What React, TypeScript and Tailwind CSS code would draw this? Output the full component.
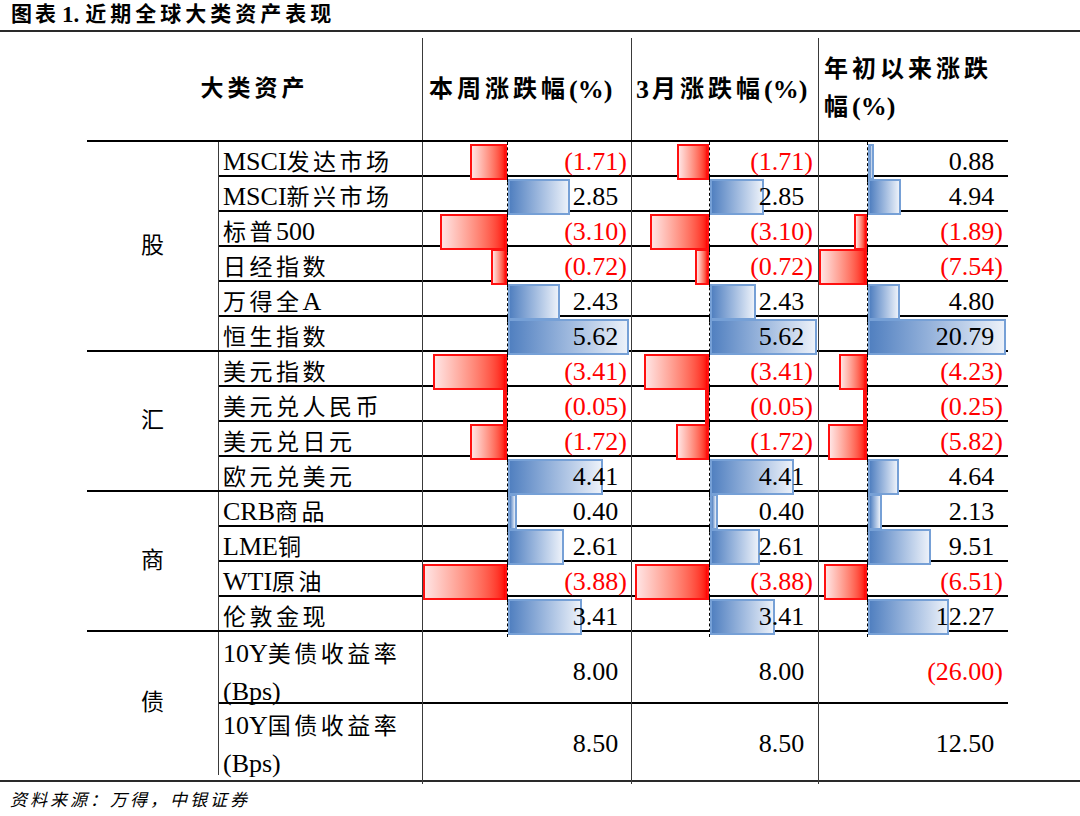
import React from "react";

type Row = { label: string; vals: number[] };
type Group = { name: string; rows: Row[]; bars: boolean };

const groups: Group[] = [
  {
    name: "股",
    bars: true,
    rows: [
      { label: "MSCI发达市场", vals: [-1.71, -1.71, 0.88] },
      { label: "MSCI新兴市场", vals: [2.85, 2.85, 4.94] },
      { label: "标普500", vals: [-3.1, -3.1, -1.89] },
      { label: "日经指数", vals: [-0.72, -0.72, -7.54] },
      { label: "万得全A", vals: [2.43, 2.43, 4.8] },
      { label: "恒生指数", vals: [5.62, 5.62, 20.79] },
    ],
  },
  {
    name: "汇",
    bars: true,
    rows: [
      { label: "美元指数", vals: [-3.41, -3.41, -4.23] },
      { label: "美元兑人民币", vals: [-0.05, -0.05, -0.25] },
      { label: "美元兑日元", vals: [-1.72, -1.72, -5.82] },
      { label: "欧元兑美元", vals: [4.41, 4.41, 4.64] },
    ],
  },
  {
    name: "商",
    bars: true,
    rows: [
      { label: "CRB商品", vals: [0.4, 0.4, 2.13] },
      { label: "LME铜", vals: [2.61, 2.61, 9.51] },
      { label: "WTI原油", vals: [-3.88, -3.88, -6.51] },
      { label: "伦敦金现", vals: [3.41, 3.41, 12.27] },
    ],
  },
  {
    name: "债",
    bars: false,
    rows: [
      { label: "10Y美债收益率\n(Bps)", vals: [8.0, 8.0, -26.0] },
      { label: "10Y国债收益率\n(Bps)", vals: [8.5, 8.5, 12.5] },
    ],
  },
];

// axis offset / px per unit for each data column
const cols = [
  { axis: "w-[85px]", scale: 21.6, pad: "pr-[4px]" },
  { axis: "w-[78px]", scale: 19, pad: "pr-[5px]" },
  { axis: "w-[49px]", scale: 6.64, pad: "pr-[5px]" },
];

const serif = "font-['Liberation_Serif','Noto_Sans_CJK_SC',serif]";

function Mixed({ text, cjk, latin }: { text: string; cjk: string; latin: string }) {
  const parts = text.split(/([\u3000-\u9fff\uff00-\uffef]+)/);
  return (
    <>
      {parts.map((p, i) =>
        i % 2 ? (
          <span key={i} className={cjk}>
            {p}
          </span>
        ) : (
          <span key={i} className={latin}>
            {p}
          </span>
        )
      )}
    </>
  );
}

function DataCell({ value, col, bar }: { value: number; col: (typeof cols)[number]; bar: boolean }) {
  const w = Math.max(1, Math.round(Math.abs(value) * col.scale));
  return (
    <div className="grid border-l border-[#3a3a3a]">
      {bar && (
        <div className="col-start-1 row-start-1 flex">
          <div className={`${col.axis} flex justify-end border-r border-dashed border-black py-[2px]`}>
            {value < 0 && (
              <div
                className="h-full border-2 border-[#ff1010] bg-linear-to-r from-[#ffe4e4] to-[#ff0000]"
                style={{ width: w }}
              />
            )}
          </div>
          <div className="flex flex-1 py-[2px]">
            {value > 0 && (
              <div
                className="h-full border-2 border-[#76a0d6] bg-linear-to-r from-[#5180c0] to-[#ecf1f9]"
                style={{ width: w }}
              />
            )}
          </div>
        </div>
      )}
      <div
        className={`col-start-1 row-start-1 flex items-center justify-end ${col.pad} text-[26px] leading-none ${serif}`}
      >
        {value < 0 ? (
          <span className="text-[#ff0000]">({Math.abs(value).toFixed(2)})</span>
        ) : (
          <span className="text-black">
            {value.toFixed(2)}
            <span className="invisible">)</span>
          </span>
        )}
      </div>
    </div>
  );
}

export default function App() {
  return (
    <div className={`w-[1080px] h-[816px] bg-white text-black ${serif}`}>
      {/* Title */}
      <div className="h-[30px] flex items-center pl-[11px] font-bold">
        <Mixed text="图表" cjk="text-[21px] tracking-[3px]" latin="" />
        <span className="text-[23px] ml-[3px] mr-[6px]">1.</span>
        <Mixed text="近期全球大类资产表现" cjk="text-[21px] tracking-[4px]" latin="" />
      </div>
      <div className="h-[2px] bg-[#2a2a2a]" />

      {/* Table */}
      <div className="ml-[87px] mt-[6px] w-[921px]">
        <div className="grid h-[102px] grid-cols-[335px_209px_187px_190px] font-bold">
          <div className="flex items-center justify-center text-[23px] tracking-[4px]">大类资产</div>
          <div className="flex items-center border-l border-[#3a3a3a] pl-[6px]">
            <Mixed text="本周涨跌幅(%)" cjk="text-[24px] tracking-[4px]" latin="text-[26px]" />
          </div>
          <div className="flex items-center border-l border-[#3a3a3a] pl-[4px]">
            <Mixed text="3月涨跌幅(%)" cjk="text-[24px] tracking-[4px]" latin="text-[26px] mr-[3px]" />
          </div>
          <div className="flex items-center border-l border-[#3a3a3a] pl-[5px]">
            <p className="leading-[35px]">
              <Mixed text="年初以来涨跌幅(%)" cjk="text-[24px] tracking-[4px]" latin="text-[26px]" />
            </p>
          </div>
        </div>

        {groups.map((g) => (
          <div key={g.name} className="flex border-t-2 border-black">
            <div className="flex w-[131px] items-center justify-center text-[23px]">{g.name}</div>
            <div className="flex-1 border-l border-[#3a3a3a]">
              {g.rows.map((r, i) => (
                <div
                  key={r.label}
                  className={
                    g.bars
                      ? i === 0
                        ? "grid h-[33px] grid-cols-[203px_209px_187px_190px]"
                        : "grid h-[35px] grid-cols-[203px_209px_187px_190px] border-t-2 border-black"
                      : i === 0
                      ? "grid h-[70px] grid-cols-[203px_209px_187px_190px]"
                      : "grid h-[73px] grid-cols-[203px_209px_187px_190px] border-t-2 border-black"
                  }
                >
                  <div className={g.bars ? "flex items-center pl-[4px] pt-[2px]" : "flex items-center pl-[4px] pt-[4px]"}>
                    <p className="whitespace-pre-line leading-[35px]">
                      <Mixed text={r.label} cjk="text-[23px] tracking-[3.5px]" latin="text-[26px]" />
                    </p>
                  </div>
                  {r.vals.map((v, j) => (
                    <DataCell key={j} value={v} col={cols[j]} bar={g.bars} />
                  ))}
                </div>
              ))}
            </div>
          </div>
        ))}
      </div>

      <div className="mt-[5px] h-[2px] bg-[#2a2a2a]" />
      <div className="pl-[10px] pt-[6px] text-[17px] italic tracking-[3px]">资料来源：万得，中银证券</div>
    </div>
  );
}
